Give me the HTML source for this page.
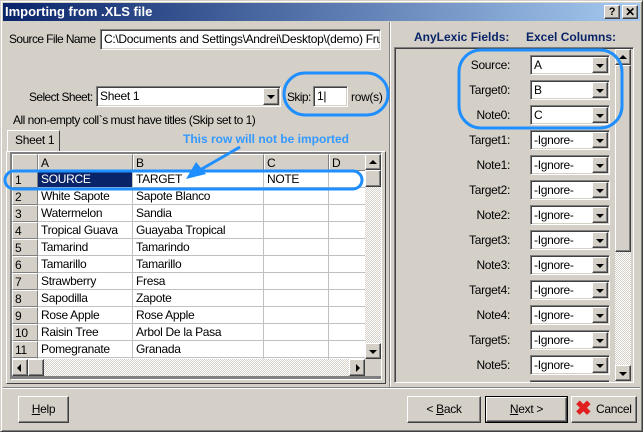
<!DOCTYPE html>
<html><head><meta charset="utf-8"><style>
*{box-sizing:border-box;margin:0;padding:0}
body{width:643px;height:432px;background:#d4d0c8;font-family:"Liberation Sans",sans-serif;font-size:12px;position:relative;overflow:hidden;letter-spacing:-0.3px}
.a{position:absolute;white-space:nowrap;overflow:hidden}
svg.a{overflow:visible}
.sunk{border:1px solid;border-color:#808080 #fff #fff #808080;box-shadow:inset 1px 1px 0 #404040,inset -1px -1px 0 #d4d0c8;background:#fff}
.btn{background:#d4d0c8;border:1px solid;border-color:#fff #404040 #404040 #fff;box-shadow:inset -1px -1px 0 #808080}
.arr{position:absolute;width:0;height:0;border-left:4px solid transparent;border-right:4px solid transparent;border-top:4px solid #000}
.t{position:absolute;white-space:nowrap}
.cell{position:absolute;height:17px;border-right:1px solid #c0c0c0;border-bottom:1px solid #c0c0c0;padding:1px 0 0 3px;white-space:nowrap;overflow:hidden;background:#fff;font-size:12px}
.hd{position:absolute;height:17px;background:#d4d0c8;border:1px solid;border-color:#fff #808080 #808080 #fff;padding:1px 0 0 2px;font-size:12px}
.lab{position:absolute;width:120px;text-align:right;left:390px}
</style></head><body>
<div class="a" style="left:0;top:0;width:643px;height:432px;border:1px solid;border-color:#d4d0c8 #404040 #404040 #d4d0c8;box-shadow:inset 1px 1px 0 #fff,inset -1px -1px 0 #808080"></div>
<div class="a" style="left:3px;top:3px;width:637px;height:18px;background:linear-gradient(90deg,#0a246a,#a6caf0)"></div>
<div class="t" style="left:5px;top:4px;color:#fff;font-weight:bold;font-size:13px;letter-spacing:0">Importing from .XLS file</div>
<div class="a btn" style="left:604px;top:5px;width:16px;height:14px;font-weight:bold;font-size:11px;text-align:center;line-height:12px">?</div>
<div class="a btn" style="left:622px;top:5px;width:16px;height:14px;font-weight:bold;font-size:12px;text-align:center;line-height:12px">✕</div>

<div class="t" style="left:9px;top:32px;letter-spacing:-0.6px">Source File Name</div>
<div class="a sunk" style="left:100px;top:29px;width:281px;height:21px;padding:2px 3px">C:\Documents and Settings\Andrei\Desktop\(demo) Fruit</div>

<div class="t" style="left:29px;top:90px;letter-spacing:-0.6px">Select Sheet:</div>
<div class="a sunk" style="left:96px;top:86px;width:185px;height:21px;padding:2px 3px">Sheet 1</div>
<div class="a btn" style="left:263px;top:88px;width:16px;height:17px"><div class="arr" style="left:3px;top:6px"></div></div>
<div class="t" style="left:287px;top:90px;letter-spacing:-0.6px">Skip:</div>
<div class="a sunk" style="left:313px;top:86px;width:35px;height:21px;padding:2px 3px">1|</div>
<div class="t" style="left:351px;top:90px">row(s)</div>
<div class="t" style="left:13px;top:113px;letter-spacing:-0.5px">All non-empty coll`s must have titles (Skip set to 1)</div>

<div class="a" style="left:7px;top:130px;width:53px;height:22px;border:1px solid;border-color:#fff #404040 #d4d0c8 #fff;background:#d4d0c8"></div>
<div class="t" style="left:15px;top:133px">Sheet 1</div>
<div class="a" style="left:6px;top:151px;width:380px;height:233px;border:1px solid;border-color:#fff #404040 #404040 #fff"></div>
<div class="a" style="left:10px;top:152px;width:372px;height:228px;border:1px solid;border-color:#808080 #fff #fff #808080;background:#808080"></div>
<div class="a" style="left:12px;top:154px;width:353px;height:205px;background:#fff;overflow:hidden" id="g">
<div class="hd" style="left:0;top:0;width:26px"></div>
<div class="hd" style="left:26px;top:0;width:95px">A</div>
<div class="hd" style="left:121px;top:0;width:131px">B</div>
<div class="hd" style="left:252px;top:0;width:65px">C</div>
<div class="hd" style="left:317px;top:0;width:40px">D</div>
</div>
<div class="a" style="left:365px;top:154px;width:16px;height:205px;background:repeating-conic-gradient(#fff 0 25%,#d4d0c8 0 50%) 0 0/2px 2px"></div>
<div class="a btn" style="left:365px;top:154px;width:16px;height:16px"><div class="arr" style="left:3px;top:5px;border-top:0;border-bottom:4px solid #000"></div></div>
<div class="a btn" style="left:365px;top:170px;width:16px;height:17px"></div>
<div class="a btn" style="left:365px;top:343px;width:16px;height:16px"><div class="arr" style="left:3px;top:6px"></div></div>
<div class="a" style="left:12px;top:359px;width:353px;height:17px;background:repeating-conic-gradient(#fff 0 25%,#d4d0c8 0 50%) 0 0/2px 2px"></div>
<div class="a btn" style="left:12px;top:359px;width:16px;height:17px"><div class="arr" style="left:4px;top:4px;border:4px solid transparent;border-left:0;border-right:4px solid #000"></div></div>
<div class="a btn" style="left:28px;top:359px;width:16px;height:17px"></div>
<div class="a btn" style="left:349px;top:359px;width:16px;height:17px"><div class="arr" style="left:6px;top:4px;border:4px solid transparent;border-right:0;border-left:4px solid #000"></div></div>
<div class="a" style="left:365px;top:359px;width:16px;height:17px;background:#d4d0c8"></div>

<div class="t" style="left:414px;top:30px;color:#0a246a;font-weight:bold;letter-spacing:0">AnyLexic Fields:</div>
<div class="t" style="left:526px;top:30px;color:#0a246a;font-weight:bold;letter-spacing:0">Excel Columns:</div>
<div class="a" style="left:389px;top:22px;width:1px;height:366px;background:#808080"></div>
<div class="a" style="left:390px;top:22px;width:1px;height:366px;background:#fff"></div>
<div class="a" style="left:394px;top:47px;width:240px;height:336px;border:1px solid;border-color:#808080 #fff #fff #808080;box-shadow:inset 1px 1px 0 #404040"></div>
<div class="a" style="left:615px;top:49px;width:16px;height:332px;background:repeating-conic-gradient(#fff 0 25%,#d4d0c8 0 50%) 0 0/2px 2px"></div>
<div class="a btn" style="left:615px;top:49px;width:16px;height:16px"><div class="arr" style="left:3px;top:5px;border-top:0;border-bottom:4px solid #000"></div></div>
<div class="a btn" style="left:615px;top:65px;width:16px;height:187px"></div>
<div class="a btn" style="left:615px;top:365px;width:16px;height:16px"><div class="arr" style="left:3px;top:6px"></div></div>
<div id="r"></div>

<div class="a" style="left:3px;top:387px;width:637px;height:1px;background:#808080"></div>
<div class="a" style="left:3px;top:388px;width:637px;height:1px;background:#fff"></div>
<div class="a btn" style="left:18px;top:396px;width:51px;height:27px;text-align:center;line-height:25px"><u>H</u>elp</div>
<div class="a btn" style="left:407px;top:396px;width:74px;height:27px;text-align:center;line-height:25px">&lt; <u>B</u>ack</div>
<div class="a" style="left:485px;top:396px;width:83px;height:27px;border:1px solid #000"><div class="a btn" style="left:0;top:0;width:81px;height:25px;text-align:center;line-height:23px"><u>N</u>ext &gt;</div></div>
<div class="a btn" style="left:571px;top:396px;width:66px;height:27px;line-height:25px;padding-left:24px">Cancel</div>
<div class="t" style="left:575px;top:398px;color:#e02020;font-weight:bold;font-size:20px;line-height:22px">✖</div>

<div class="t" style="left:183px;top:132px;color:#3399ff;font-weight:bold;letter-spacing:0">This row will not be imported</div>
<svg class="a" style="left:0;top:0" width="643" height="432">
<g fill="none" stroke="#1f8fff" stroke-width="3">
<rect x="284" y="73" width="104" height="42" rx="21"/>
<rect x="5" y="171" width="357" height="18" rx="9"/>
<rect x="459" y="50" width="163" height="78" rx="22"/>
<line x1="240" y1="147" x2="200" y2="170"/>
</g>
<polygon points="186,179 196,162 206,174" fill="#1f8fff"/>
</svg>
<script>
var rows=[["SOURCE","TARGET","NOTE"],["White Sapote","Sapote Blanco"],["Watermelon","Sandia"],["Tropical Guava","Guayaba Tropical"],["Tamarind","Tamarindo"],["Tamarillo","Tamarillo"],["Strawberry","Fresa"],["Sapodilla","Zapote"],["Rose Apple","Rose Apple"],["Raisin Tree","Arbol De la Pasa"],["Pomegranate","Granada"],["",""]];
var g=document.getElementById('g'),h='';
rows.forEach(function(r,i){var y=17+i*17;
h+='<div class="hd" style="left:0;top:'+y+'px;width:26px">'+(i<11?i+1:'')+'</div>';
var c=[[26,95],[121,131],[252,65],[317,40]];
c.forEach(function(cc,j){var st=(i==0&&j==0)?'background:#0a246a;color:#fff;':'';
h+='<div class="cell" style="'+st+'left:'+cc[0]+'px;top:'+y+'px;width:'+cc[1]+'px">'+(r[j]||'')+'</div>';});});
g.innerHTML+=h;
var f=["Source:","Target0:","Note0:","Target1:","Note1:","Target2:","Note2:","Target3:","Note3:","Target4:","Note4:","Target5:","Note5:"],v=["A","B","C"],s='';
f.forEach(function(n,i){var y=55+i*25;
s+='<div class="lab" style="top:'+(y+3)+'px">'+n+'</div>';
s+='<div class="a sunk" style="left:530px;top:'+y+'px;width:80px;height:20px;padding:2px 3px">'+(v[i]||'-Ignore-')+'</div>';
s+='<div class="a btn" style="left:592px;top:'+(y+2)+'px;width:16px;height:16px"><div class="arr" style="left:3px;top:6px"></div></div>';});
s+='<div class="a sunk" style="left:530px;top:380px;width:80px;height:3px"></div>';
document.getElementById('r').innerHTML=s;
</script>
</body></html>
